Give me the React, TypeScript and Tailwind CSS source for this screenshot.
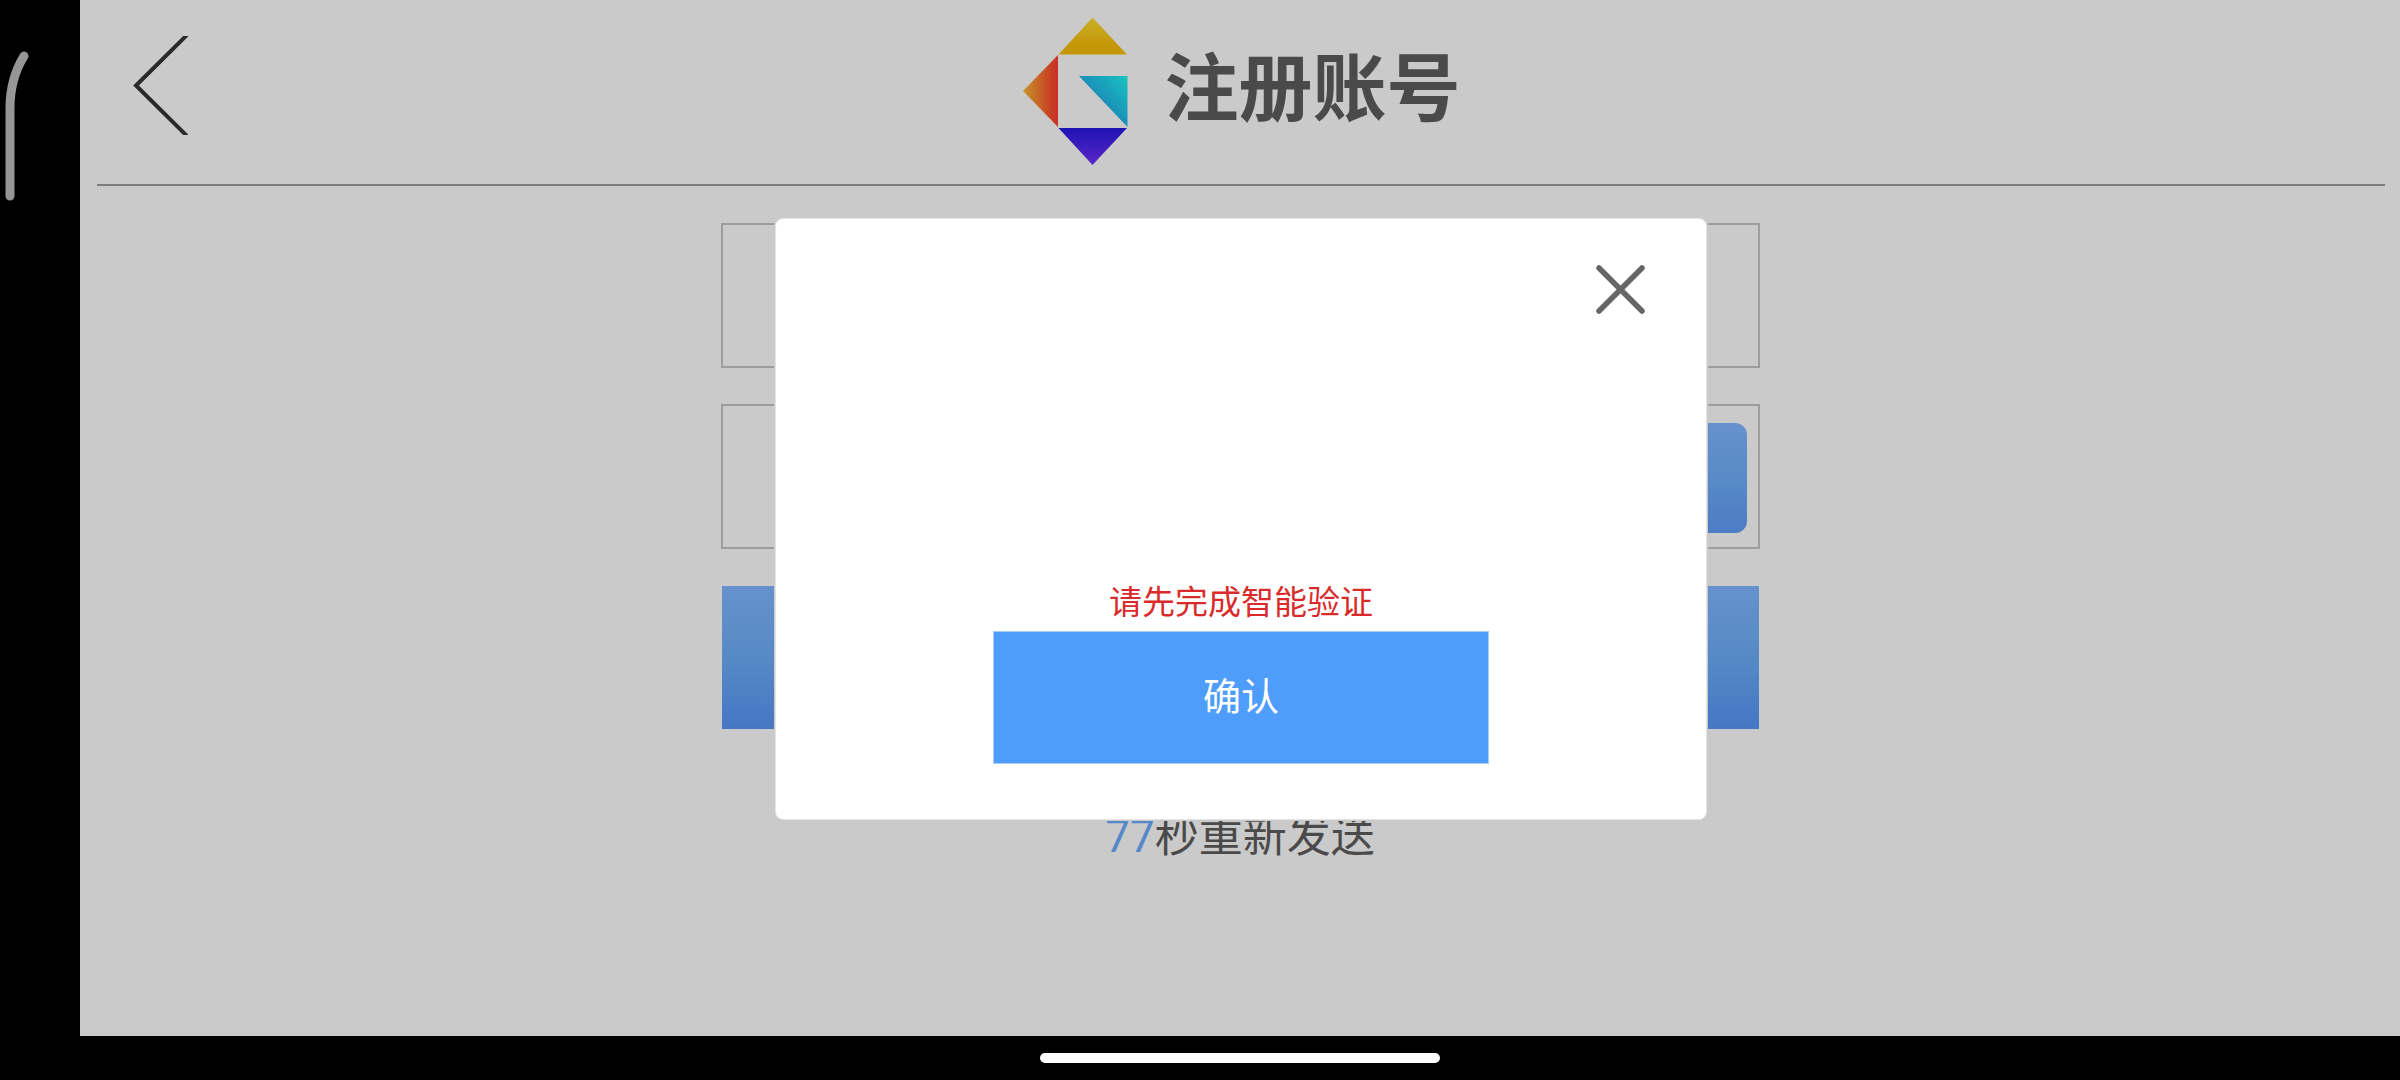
import { useState } from "react";

// Brand mark, four coloured triangles around an open square
const Logo = () => (
  <svg width="105" height="148" viewBox="0 0 105 148" aria-hidden="true">
    <defs>
      <linearGradient id="top" x1="0" y1="0" x2="0" y2="1">
        <stop offset="0" stopColor="#c9b02b" />
        <stop offset="0.75" stopColor="#c59707" />
        <stop offset="1" stopColor="#c49808" />
      </linearGradient>
      <linearGradient id="left" x1="0" y1="0" x2="1" y2="0">
        <stop offset="0" stopColor="#c8942a" />
        <stop offset="0.85" stopColor="#c73a24" />
        <stop offset="1" stopColor="#c83224" />
      </linearGradient>
      <linearGradient id="bottom" x1="0" y1="0" x2="0" y2="1">
        <stop offset="0" stopColor="#1d12b4" />
        <stop offset="1" stopColor="#5c28c8" />
      </linearGradient>
      <linearGradient id="inner" x1="1" y1="0" x2="0.4" y2="0.6">
        <stop offset="0" stopColor="#18c4c0" />
        <stop offset="1" stopColor="#1b86b8" />
      </linearGradient>
    </defs>
    <path d="M69.500 0.500L104 37.500H35.500Z" fill="url(#top)" />
    <path d="M0 74L35 38V110Z" fill="url(#left)" />
    <path d="M35.500 111H104L69.500 148Z" fill="url(#bottom)" />
    <path d="M56 59H104.500V110Z" fill="url(#inner)" />
  </svg>
);

const Header = () => (
  <header className="mr-[15px] ml-[17px] flex h-[186px] items-center border-b-2 border-[#7c7c7c] pb-[2px]">
    <button type="button" aria-label="返回" className="mb-3 ml-9 w-[55px]">
      <svg
        className="block"
        width="55"
        height="99"
        viewBox="0 0 55 99"
        fill="none"
      >
        <path
          d="M54 -1L3 49.500L54 100"
          stroke="#1c1c1c"
          strokeOpacity="0.92"
          strokeWidth="4"
        />
      </svg>
    </button>
    <div className="mr-[90px] flex flex-1 items-center justify-center gap-[37px]">
      <Logo />
      <h1 className="mb-4 text-[74px] leading-none font-bold">注册账号</h1>
    </div>
  </header>
);

const RegisterForm = () => (
  <form className="mx-auto mt-[37px] flex w-full max-w-[1039px] flex-col gap-9">
    <input
      type="tel"
      aria-label="手机号"
      className="h-[145px] w-full border-2 border-[#9d9d9d] px-8 text-[44px] outline-none"
    />
    <div className="flex h-[145px] items-center border-2 border-[#9d9d9d] pt-[2px] pr-[11px]">
      <input
        type="text"
        aria-label="验证码"
        className="h-full min-w-0 flex-1 px-8 text-[44px] outline-none"
      />
      <button
        type="button"
        aria-label="获取验证码"
        className="h-[110px] w-[280px] rounded-xl bg-linear-to-b from-[#6691cc] via-[#588bc7] to-[#4c7cc4]"
      />
    </div>
    <button
      type="submit"
      aria-label="注册"
      className="mx-px mt-px h-[143px] bg-linear-to-b from-[#6691cc] via-[#568ac6] to-[#4577c4]"
    />
  </form>
);

const VerifyDialog = ({ onClose }: { onClose: () => void }) => (
  <div className="absolute inset-0 flex items-start justify-center pt-[218px] pr-4 pl-[18px]">
    <div
      role="dialog"
      aria-label="智能验证"
      className="flex w-full max-w-[932px] flex-col items-center rounded-lg border border-[#e4e4e4] bg-white pb-[55px] ring-1 ring-[#cacaca]"
    >
      <button
        type="button"
        aria-label="关闭"
        onClick={onClose}
        className="mt-[45px] mr-[61px] self-end"
      >
        <svg width="50" height="50" viewBox="0 0 50 50" fill="none">
          <path
            d="M4 4L47 47M47 4L4 47"
            stroke="#666666"
            strokeWidth="5.500"
            strokeLinecap="round"
          />
        </svg>
      </button>
      <p className="mt-64 pb-px text-[33px] leading-[60px] text-[#d92b2b]">
        请先完成智能验证
      </p>
      <button
        type="button"
        className="h-[133px] w-[496px] max-w-full border border-[#a9cdf3] bg-[#4e9dfa] pb-2 text-[38px] text-white"
      >
        确认
      </button>
    </div>
  </div>
);

const App = () => {
  const [open, setOpen] = useState(true);

  return (
    <div className="flex min-h-screen flex-col bg-black font-['Noto_Sans_CJK_SC',sans-serif]">
      <div className="flex flex-1">
        {/* Edge of the device with the gesture handle */}
        <div className="w-20 shrink-0 pt-12">
          <svg width="40" height="156" viewBox="0 0 40 156" fill="none">
            <path
              d="M24 8Q10 31 10 60V148"
              stroke="#969696"
              strokeWidth="9"
              strokeLinecap="round"
            />
          </svg>
        </div>
        <main className="relative flex-1 bg-[#cacaca] text-[#4a4a4a]">
          <Header />
          <RegisterForm />
          <p className="mt-[72px] text-center text-[44px] leading-[64px]">
            <span className="font-[Roboto,sans-serif] text-[#5488cb]">77</span>
            秒重新发送
          </p>
          {open && <VerifyDialog onClose={() => setOpen(false)} />}
        </main>
      </div>
      {/* Home indicator */}
      <div className="flex h-11 items-center justify-center pl-20">
        <div className="h-2.5 w-[400px] rounded-full bg-white" />
      </div>
    </div>
  );
};

export default App;
